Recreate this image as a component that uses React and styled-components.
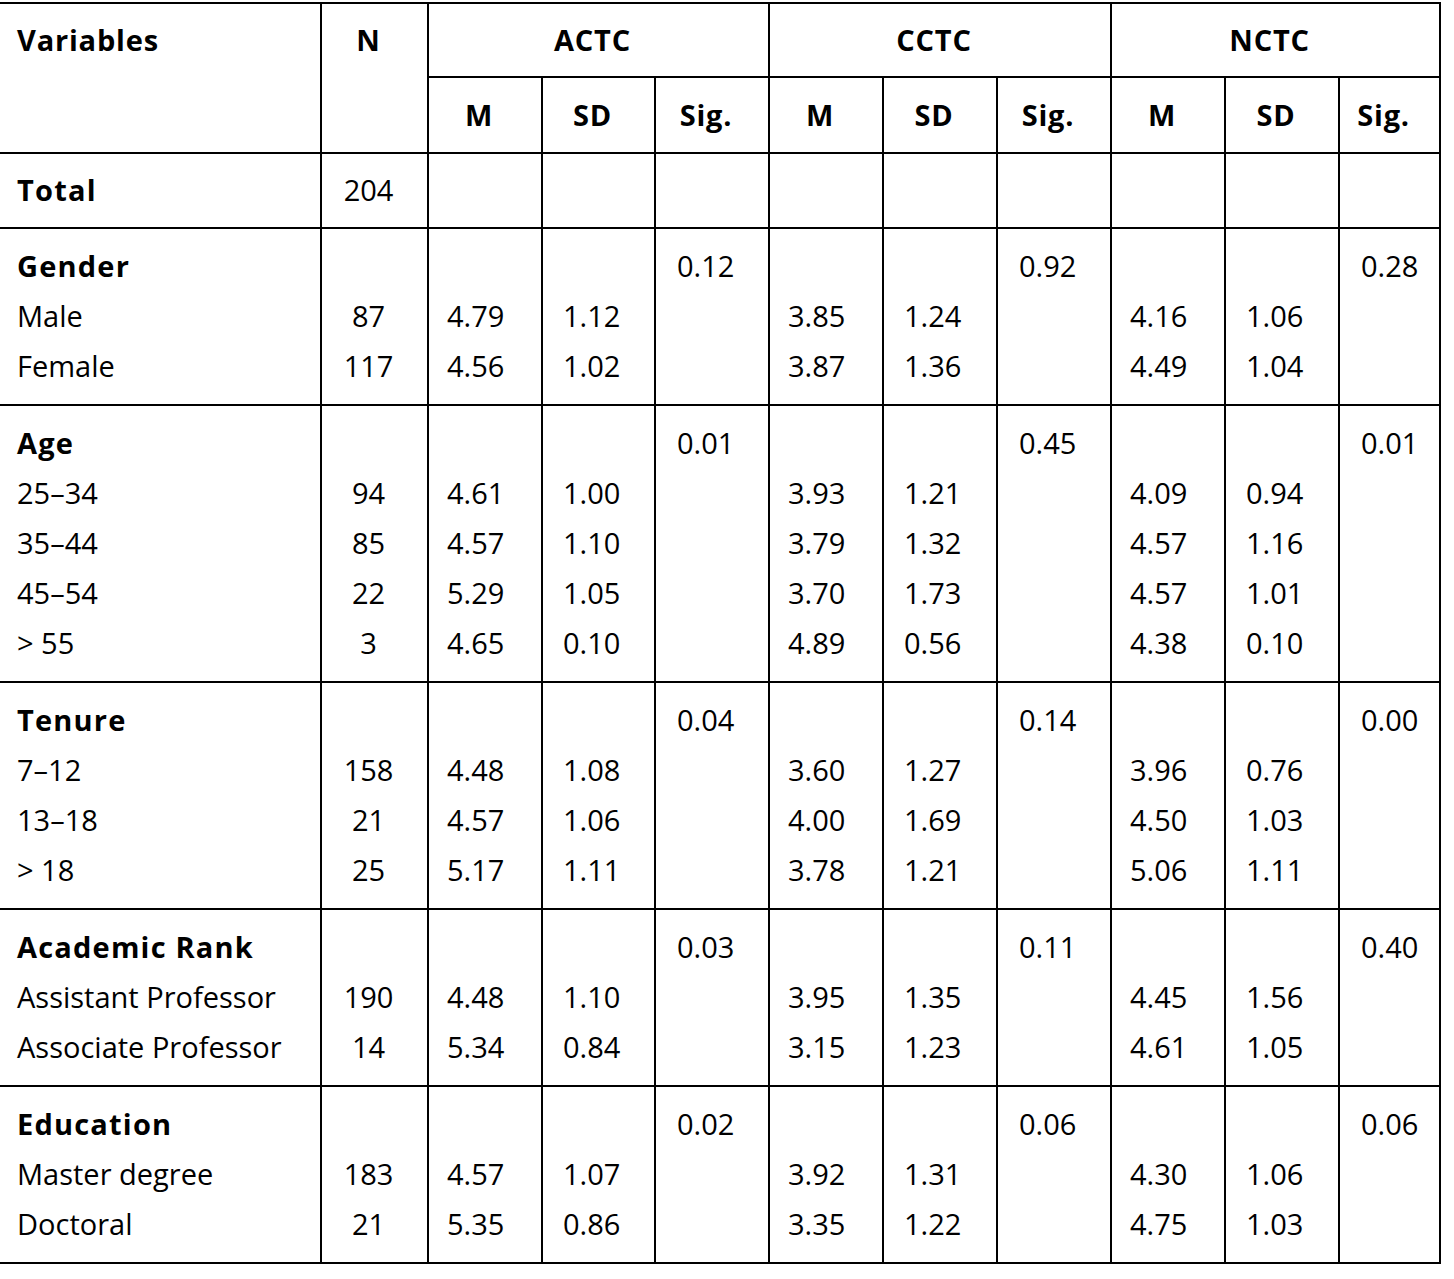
import React from "react"
import styled, { createGlobalStyle } from "styled-components"

const GlobalStyle = createGlobalStyle`
    body {
        margin: 0;
        background: #ffffff;
        font-family: "Open Sans", Lato, sans-serif;
        color: #000000;
    }
`

const Table = styled.table`
    margin-top: 2px;
    width: 1440px;
    table-layout: fixed;
    border-collapse: collapse;
    border-top: 2px solid #000;
    border-right: 2px solid #000;
    border-bottom: 2px solid #000;
    font-size: 29px;
`

const Col = styled.col`
    width: ${props => props.$w}px;
`

const Head = styled.th`
    font-weight: 700;
    letter-spacing: 0.8px;
    line-height: 50px;
    padding: ${props => (props.$tight ? "11px" : "12px")} 12px ${props => (props.$tight ? "11px" : "12px")} 0;
    text-align: ${props => (props.$left ? "left" : "center")};
    padding-left: ${props => (props.$left ? "17px" : "0")};
    vertical-align: ${props => (props.$top ? "top" : "middle")};
    border-left: ${props => (props.$first ? "none" : "2px solid #000")};
    border-bottom: 2px solid #000;
    white-space: nowrap;
`

const Cell = styled.td`
    vertical-align: top;
    padding: ${props => (props.$single ? "11px" : "12px")} ${props => (props.$center ? "12px" : "0")} ${props => (props.$single ? "12px" : "13px")} ${props => props.$pad}px;
    text-align: ${props => (props.$center ? "center" : "left")};
    border-left: ${props => (props.$first ? "none" : "2px solid #000")};
    border-bottom: 2px solid #000;
    white-space: nowrap;
`

const Line = styled.div`
    height: 50px;
    line-height: 50px;
    font-weight: ${props => (props.$bold ? 700 : 400)};
    letter-spacing: ${props => (props.$bold ? "1.2px" : "0")};
`

const groups = [
    {
        title: "Gender",
        sig: ["0.12", "0.92", "0.28"],
        rows: [
            ["Male", "87", "4.79", "1.12", "3.85", "1.24", "4.16", "1.06"],
            ["Female", "117", "4.56", "1.02", "3.87", "1.36", "4.49", "1.04"],
        ],
    },
    {
        title: "Age",
        sig: ["0.01", "0.45", "0.01"],
        rows: [
            ["25–34", "94", "4.61", "1.00", "3.93", "1.21", "4.09", "0.94"],
            ["35–44", "85", "4.57", "1.10", "3.79", "1.32", "4.57", "1.16"],
            ["45–54", "22", "5.29", "1.05", "3.70", "1.73", "4.57", "1.01"],
            ["> 55", "3", "4.65", "0.10", "4.89", "0.56", "4.38", "0.10"],
        ],
    },
    {
        title: "Tenure",
        sig: ["0.04", "0.14", "0.00"],
        rows: [
            ["7–12", "158", "4.48", "1.08", "3.60", "1.27", "3.96", "0.76"],
            ["13–18", "21", "4.57", "1.06", "4.00", "1.69", "4.50", "1.03"],
            ["> 18", "25", "5.17", "1.11", "3.78", "1.21", "5.06", "1.11"],
        ],
    },
    {
        title: "Academic Rank",
        sig: ["0.03", "0.11", "0.40"],
        rows: [
            ["Assistant Professor", "190", "4.48", "1.10", "3.95", "1.35", "4.45", "1.56"],
            ["Associate Professor", "14", "5.34", "0.84", "3.15", "1.23", "4.61", "1.05"],
        ],
    },
    {
        title: "Education",
        sig: ["0.02", "0.06", "0.06"],
        rows: [
            ["Master degree", "183", "4.57", "1.07", "3.92", "1.31", "4.30", "1.06"],
            ["Doctoral", "21", "5.35", "0.86", "3.35", "1.22", "4.75", "1.03"],
        ],
    },
]

const widths = [321, 107, 114, 113, 114, 114, 114, 114, 114, 114, 101]
const scales = ["ACTC", "CCTC", "NCTC"]

function column(group, idx) {
    return group.rows.map((r, i) => <Line key={i}>{r[idx]}</Line>)
}

function GroupRow({ group }) {
    return (
        <tr>
            <Cell $first $pad={17}>
                <Line $bold>{group.title}</Line>
                {column(group, 0)}
            </Cell>
            <Cell $center $pad={0}>
                <Line />
                {column(group, 1)}
            </Cell>
            {scales.map((s, k) => (
                <React.Fragment key={s}>
                    <Cell $pad={18}>
                        <Line />
                        {column(group, 2 + k * 2)}
                    </Cell>
                    <Cell $pad={20}>
                        <Line />
                        {column(group, 3 + k * 2)}
                    </Cell>
                    <Cell $pad={21}>
                        <Line>{group.sig[k]}</Line>
                    </Cell>
                </React.Fragment>
            ))}
        </tr>
    )
}

function App() {
    return (
        <>
            <GlobalStyle />
            <Table>
                <colgroup>
                    {widths.map((w, i) => <Col key={i} $w={w} />)}
                </colgroup>
                <thead>
                    <tr>
                        <Head rowSpan={2} $first $left $top $tight>Variables</Head>
                        <Head rowSpan={2} $top $tight>N</Head>
                        {scales.map(s => (
                            <Head key={s} colSpan={3} $tight>{s}</Head>
                        ))}
                    </tr>
                    <tr>
                        {scales.map(s => (
                            <React.Fragment key={s}>
                                <Head>M</Head>
                                <Head>SD</Head>
                                <Head>Sig.</Head>
                            </React.Fragment>
                        ))}
                    </tr>
                </thead>
                <tbody>
                    <tr>
                        <Cell $first $single $pad={17}>
                            <Line $bold>Total</Line>
                        </Cell>
                        <Cell $center $single $pad={0}>
                            <Line>204</Line>
                        </Cell>
                        {Array.from({ length: 9 }).map((_, i) => (
                            <Cell key={i} $single $pad={20} />
                        ))}
                    </tr>
                    {groups.map(g => (
                        <GroupRow key={g.title} group={g} />
                    ))}
                </tbody>
            </Table>
        </>
    )
}

export default App
